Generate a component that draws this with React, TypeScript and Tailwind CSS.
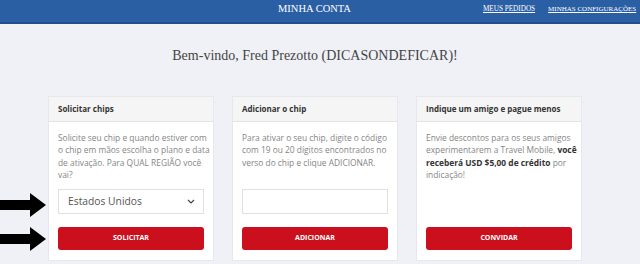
import React from 'react';

const serif = { fontFamily: '"Liberation Serif", "DejaVu Serif", serif' };
const sans = { fontFamily: '"Open Sans", "Noto Sans", sans-serif' };

const Arrow = ({ className }: { className: string }) => (
  <svg className={className} width="46" height="24" viewBox="0 0 46 24">
    <path d="M0 7 H30 V0 L46 12 L30 24 V17 H0 Z" fill="#000" />
  </svg>
);

const Card = ({ title, children }: { title: string; children: React.ReactNode }) => (
  <div className="w-[166px] bg-white border border-[#e6e8ec] flex flex-col">
    <div className="h-[25px] shrink-0 bg-[#f5f5f5] border-b border-[#e4e4e4] flex items-center px-[9px]">
      <span className="text-[8px] font-bold text-[#333]" style={sans}>{title}</span>
    </div>
    <div className="flex flex-col px-[9px] pt-[10px] pb-[10px]">{children}</div>
  </div>
);

const RedButton = ({ label }: { label: string }) => (
  <button
    className="h-[23px] w-full rounded-[3px] bg-[#cc0f1c] text-white text-[7px] font-bold"
    style={sans}
  >
    {label}
  </button>
);

const bodyText = 'text-[8.4px] leading-[12.3px] text-[#858585] h-[50px] -mr-[7px]';

export default function App() {
  return (
    <div className="w-[640px] h-[264px] bg-[#eff1f6] relative overflow-hidden">
      {/* Top bar */}
      <div className="h-[24px] bg-[#2b5fa4] border-b-2 border-[#214d8a] flex items-start pt-[2px] text-white" style={serif}>
        <span className="ml-[278px] text-[10.5px] leading-[14px]">MINHA CONTA</span>
        <a className="ml-[132px] mt-[3px] text-[7.2px] leading-[9px] underline">MEUS PEDIDOS</a>
        <a className="ml-[13px] mt-[3px] text-[7px] leading-[9px] underline whitespace-nowrap">MINHAS CONFIGURAÇÕES</a>
      </div>

      {/* Welcome */}
      <div className="pt-[24px] h-[72px] flex justify-center pr-[10px]">
        <h1 className="text-[14px] leading-[16px] text-[#444]" style={serif}>
          Bem-vindo, Fred Prezotto (DICASONDEFICAR)!
        </h1>
      </div>

      {/* Cards */}
      <div className="flex items-start gap-[18px] pl-[48px]">
        <Card title="Solicitar chips">
          <p className={bodyText} style={sans}>
            Solicite seu chip e quando estiver com o chip em mãos escolha o plano e data de ativação. Para QUAL REGIÃO você vai?
          </p>
          <div className="mt-[7px] h-[25px] border border-[#e0e0e0] flex items-center justify-between pl-[9px] pr-[8px]">
            <span className="text-[10.3px] text-[#555]" style={sans}>Estados Unidos</span>
            <svg width="8" height="5" viewBox="0 0 8 5">
              <path d="M1 1 L4 4 L7 1" stroke="#444" strokeWidth="1.2" fill="none" />
            </svg>
          </div>
          <div className="mt-[8px]">
            <RedButton label="SOLICITAR" />
          </div>
        </Card>

        <Card title="Adicionar o chip">
          <p className={bodyText} style={sans}>
            Para ativar o seu chip, digite o código com 19 ou 20 dígitos encontrados no verso do chip e clique ADICIONAR.
          </p>
          <div className="mt-[7px] h-[25px] border border-[#e0e0e0] bg-white" />
          <div className="mt-[8px]">
            <RedButton label="ADICIONAR" />
          </div>
        </Card>

        <Card title="Indique um amigo e pague menos">
          <p className={bodyText} style={sans}>
            Envie descontos para os seus amigos experimentarem a Travel Mobile,{' '}
            <b className="text-[#333] font-bold">você receberá USD $5,00 de crédito</b> por indicação!
          </p>
          <div className="mt-[40px]">
            <RedButton label="CONVIDAR" />
          </div>
        </Card>
      </div>

      {/* annotation arrows */}
      <Arrow className="absolute left-0 top-[193px]" />
      <Arrow className="absolute left-0 top-[227px]" />
    </div>
  );
}
